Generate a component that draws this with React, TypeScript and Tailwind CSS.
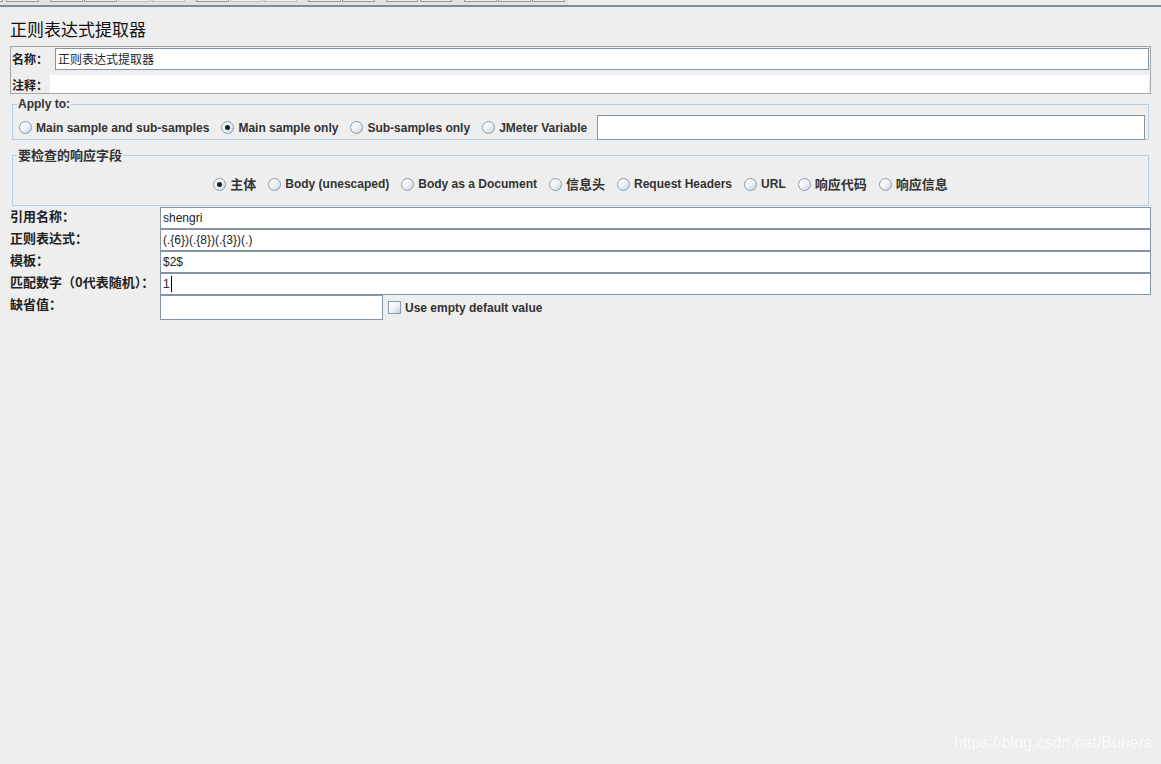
const cn = '"Noto Sans CJK SC", "Liberation Sans", sans-serif';

function Radio({ checked = false }: { checked?: boolean }) {
  return (
    <span className="w-[13px] h-[13px] shrink-0 rounded-full border border-[#8b9bab] bg-linear-to-br from-white via-[#eef3f8] to-[#c3d3e2] flex items-center justify-center">
      {checked && <span className="w-[5px] h-[5px] rounded-full bg-[#1c1c1c]" />}
    </span>
  );
}

function RadioItem({ label, checked, cjk }: { label: string; checked?: boolean; cjk?: boolean }) {
  return (
    <label className="flex items-center gap-[4px]">
      <Radio checked={checked} />
      <span
        className={`${cjk ? "text-[13px]" : "text-[12px]"} font-bold text-[#333] whitespace-nowrap leading-[16px]`}
        style={{ fontFamily: cjk ? cn : undefined }}
      >
        {label}
      </span>
    </label>
  );
}

function FieldRow({ label, value, cursor }: { label: string; value: string; cursor?: boolean }) {
  return (
    <div className="flex h-[22px]">
      <div className="w-[150px] pt-[1px] text-[13px] font-bold leading-[16px] text-[#222]" style={{ fontFamily: cn }}>
        {label}
      </div>
      <div className="flex-1 h-[22px] bg-white border border-[#8495a6] px-[2px] flex items-center text-[12px] text-[#222]">
        {value}
        {cursor && <span className="w-px h-[16px] bg-black ml-[1px]" />}
      </div>
    </div>
  );
}

export default function App() {
  const toolbar = [
    [6, 39, false], [50, 83, false], [84, 117, false], [118, 151, true], [152, 185, true],
    [196, 229, false], [230, 263, true], [264, 297, true], [308, 341, false], [342, 375, false],
    [386, 418, false], [420, 452, false], [464, 497, false], [498, 531, false], [532, 565, false],
  ] as const;

  return (
    <div
      className="relative min-h-screen w-full bg-[#eeeeee] text-[#222]"
      style={{ fontFamily: '"Liberation Sans", "Noto Sans CJK SC", sans-serif' }}
    >
      {/* toolbar stub */}
      <div className="relative h-[5px] w-[568px] bg-[#e2e2e2]">
        <div className="absolute left-0 top-0 h-[2px] w-[3px] border-b border-r border-[#9a9a9a] bg-[#ececec]" />
        {toolbar.map(([l, r, dis], i) => (
          <div
            key={i}
            className={`absolute top-0 h-[2px] border-b border-x ${dis ? "border-[#c4c4c4]" : "border-[#9a9a9a]"} bg-[#ececec]`}
            style={{ left: l, width: r - l }}
          />
        ))}
      </div>
      <div className="h-[2px] bg-[#7f8c98]" />

      {/* title */}
      <div className="h-[39px] px-[10px] flex items-end pb-[6px]">
        <span className="text-[17px] leading-[22px] text-[#111]" style={{ fontFamily: cn }}>
          正则表达式提取器
        </span>
      </div>

      {/* name / comment panel */}
      <div className="mx-[10px] h-[48px] border border-[#a6a6a6] flex flex-col" style={{ fontFamily: cn }}>
        <div className="flex items-center h-[23px] pt-px">
          <span className="w-[44px] pl-[1px] text-[12px] font-bold leading-[16px]">名称：</span>
          <div className="flex-1 mr-[1px] h-[22px] bg-white border border-[#8495a6] px-[2px] flex items-center text-[12px]">
            正则表达式提取器
          </div>
        </div>
        <div className="flex items-end flex-1 pt-[5px]">
          <span className="w-[39px] pl-[1px] text-[12px] font-bold leading-[16px] self-center pt-[2px]">注释：</span>
          <div className="flex-1 mr-[1px] h-full bg-white" />
        </div>
      </div>

      {/* apply to */}
      <fieldset className="mx-[12px] mt-[3px] h-[43px] border border-[#b8cfe5]">
        <legend className="ml-[4px] px-[1px] text-[12px] font-bold leading-[14px] text-[#333]">Apply to:</legend>
        <div className="flex items-center h-[27px] mt-[3px] pl-[6px] pr-[3px]">
          <div className="flex items-center gap-[12px]">
            <RadioItem label="Main sample and sub-samples" />
            <RadioItem label="Main sample only" checked />
            <RadioItem label="Sub-samples only" />
            <RadioItem label="JMeter Variable" />
          </div>
          <div className="flex-1 ml-[10px] h-[25px] bg-white border border-[#8495a6]" />
        </div>
      </fieldset>

      {/* response field to check */}
      <fieldset className="mx-[12px] mt-[8px] h-[58px] border border-[#b8cfe5]">
        <legend className="ml-[4px] px-[1px] text-[13px] font-bold leading-[14px] text-[#333]" style={{ fontFamily: cn }}>
          要检查的响应字段
        </legend>
        <div className="flex items-center justify-center gap-[12px] h-[34px] pt-[10px]">
          <RadioItem label="主体" checked cjk />
          <RadioItem label="Body (unescaped)" />
          <RadioItem label="Body as a Document" />
          <RadioItem label="信息头" cjk />
          <RadioItem label="Request Headers" />
          <RadioItem label="URL" />
          <RadioItem label="响应代码" cjk />
          <RadioItem label="响应信息" cjk />
        </div>
      </fieldset>

      {/* fields */}
      <div className="px-[10px] pt-[1px] flex flex-col">
        <FieldRow label="引用名称：" value="shengri" />
        <FieldRow label="正则表达式：" value="(.{6})(.{8})(.{3})(.)" />
        <FieldRow label="模板：" value="$2$" />
        <FieldRow label="匹配数字（0代表随机）：" value="1" cursor />
        <div className="flex h-[25px]">
          <div className="w-[150px] pt-[1px] text-[13px] font-bold leading-[16px]" style={{ fontFamily: cn }}>
            缺省值：
          </div>
          <div className="w-[223px] h-[25px] bg-white border border-[#8495a6]" />
          <label className="ml-[5px] flex items-center gap-[4px]">
            <span className="w-[13px] h-[13px] border border-[#8b9bab] bg-linear-to-br from-white via-[#eef3f8] to-[#c3d3e2]" />
            <span className="text-[12px] font-bold text-[#333]">Use empty default value</span>
          </label>
        </div>
      </div>

      {/* watermark */}
      <div className="absolute right-[9px] bottom-[9px] text-[16px] text-[#fcfcfc] [text-shadow:0_0_1px_#e0e0e0]">
        https://blog.csdn.net/Buriers
      </div>
    </div>
  );
}
